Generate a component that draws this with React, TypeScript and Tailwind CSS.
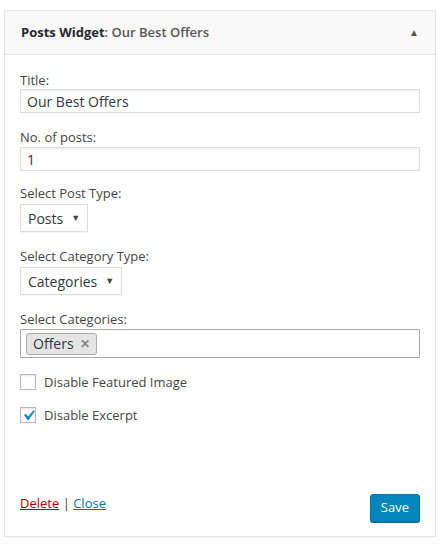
import { useState } from 'react';

function Label({ children }: { children: React.ReactNode }) {
  return <label className="block text-[13px] leading-[18px] text-[#444]">{children}</label>;
}

function Select({ value }: { value: string }) {
  return (
    <div className="mt-[2px] inline-flex h-[28px] items-center gap-[8px] border border-[#ddd] bg-white pl-[7px] pr-[7px] text-[14px] text-[#32373c] shadow-[0_1px_1px_rgba(0,0,0,0.04)]">
      <span>{value}</span>
      <span className="text-[9px] text-[#444]">▼</span>
    </div>
  );
}

function Checkbox({ checked, label, onToggle }: { checked: boolean; label: string; onToggle: () => void }) {
  return (
    <div className="flex h-[16px] items-center gap-[8px]" onClick={onToggle}>
      <span className="flex h-[16px] w-[16px] shrink-0 items-center justify-center overflow-visible border border-[#b4b9be] bg-white shadow-[inset_0_1px_2px_rgba(0,0,0,0.1)]">
        {checked && (
          <svg width="21" height="21" viewBox="0 0 20 20" className="-m-[3px] shrink-0">
            <path d="M14.83 4.89l1.34.94-5.81 8.38H9.02L5.78 9.67l1.34-1.25 2.57 2.4z" fill="#1e8cbe" />
          </svg>
        )}
      </span>
      <span className="text-[13px] leading-[16px] text-[#444]">{label}</span>
    </div>
  );
}

const inputCls =
  'block h-[24px] w-full border border-[#ddd] px-[6px] text-[14px] text-[#32373c] shadow-[inset_0_1px_2px_rgba(0,0,0,0.07)] outline-none';

export default function App() {
  const [featured, setFeatured] = useState(false);
  const [excerpt, setExcerpt] = useState(true);

  return (
    <div className="h-[548px] w-[447px] bg-white pl-[4px] pr-[11px] pt-[10px] font-['Open_Sans',sans-serif]">
      <div className="border border-[#e5e5e5] bg-white shadow-[0_1px_1px_rgba(0,0,0,0.04)]">
        <div className="flex h-[44px] items-center justify-between border-b border-[#e5e5e5] bg-[#f9f9f9] pl-[16px] pr-[16px]">
          <h3 className="text-[13px] font-bold text-[#23282d]">
            Posts Widget<span className="font-semibold text-[#555]">: Our Best Offers</span>
          </h3>
          <span className="text-[10px] text-[#555]">▲</span>
        </div>
        <div className="px-[15px] pt-[16px] pb-[14px]">
          <Label>Title:</Label>
          <input readOnly value="Our Best Offers" className={inputCls} />
          <div className="mt-[15px]">
            <Label>No. of posts:</Label>
            <input readOnly value="1" className={`mt-[1px] ${inputCls}`} />
          </div>
          <div className="mt-[13px]">
            <Label>Select Post Type:</Label>
            <Select value="Posts" />
          </div>
          <div className="mt-[15px]">
            <Label>Select Category Type:</Label>
            <Select value="Categories" />
          </div>
          <div className="mt-[15px]">
            <Label>Select Categories:</Label>
            <div className="mt-[1px] flex h-[29px] items-center border border-[#aaa] bg-white px-[5px]">
              <span className="flex h-[22px] items-center gap-[6px] rounded-[3px] border border-[#aaa] bg-[#e4e4e4] pl-[6px] pr-[6px] text-[14px] text-[#32373c]">
                Offers
                <span className="text-[12px] font-bold leading-none text-[#888]">✕</span>
              </span>
            </div>
          </div>
          <div className="mt-[16px] flex flex-col gap-[17px]">
            <Checkbox checked={featured} label="Disable Featured Image" onToggle={() => setFeatured(!featured)} />
            <Checkbox checked={excerpt} label="Disable Excerpt" onToggle={() => setExcerpt(!excerpt)} />
          </div>
          <div className="mt-[71px] flex items-start justify-between">
            <div className="text-[13px] leading-[18px]">
              <a href="#" className="text-[#a00] underline">Delete</a>
              <span className="text-[#444]"> | </span>
              <a href="#" className="text-[#0073aa] underline">Close</a>
            </div>
            <button className="h-[28px] rounded-[3px] border border-[#0073aa] bg-[#0085ba] px-[10px] text-[13px] text-white shadow-[0_1px_0_#006799]">
              Save
            </button>
          </div>
        </div>
      </div>
    </div>
  );
}
